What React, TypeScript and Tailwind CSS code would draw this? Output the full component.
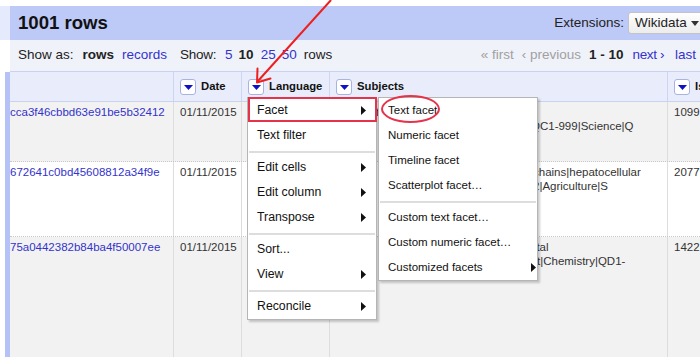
import React from "react";

const LINK = "text-[#3333cc]";

function DownBtn() {
  return (
    <span className="inline-flex h-[16px] w-[16px] shrink-0 items-center justify-center rounded-[3px] border border-[#a9b3df] bg-white">
      <svg width="9" height="5" viewBox="0 0 9 5">
        <path d="M0 0H9L4.5 5Z" fill="#0e10c8" />
      </svg>
    </span>
  );
}

function RightTri() {
  return (
    <svg width="5" height="9" viewBox="0 0 5 9" className="shrink-0">
      <path d="M0 0L5 4.5L0 9Z" fill="#111" />
    </svg>
  );
}

function MenuItem({ label, arrow, pad }: { label: string; arrow?: boolean; pad: string }) {
  return (
    <div className={`flex h-[25px] items-center justify-between ${pad}`}>
      <span className="whitespace-nowrap">{label}</span>
      {arrow ? <RightTri /> : null}
    </div>
  );
}

function Sep() {
  return (
    <div className="flex h-[7px] items-center px-[1px]">
      <div className="h-[2px] w-full bg-[#dddddd]" />
    </div>
  );
}

function HeaderCell({ label, w, border = true }: { label: string; w: string; border?: boolean }) {
  return (
    <div
      className={`flex h-full shrink-0 items-center gap-[5px] pl-[6px] ${w} ${
        border ? "border-r border-[#cdd5f0]" : ""
      }`}
    >
      <span className="-mt-[2px]">
        <DownBtn />
      </span>
      <span className="whitespace-nowrap font-bold text-[11.3px] text-[#111]">{label}</span>
    </div>
  );
}

function Row({
  h,
  bg,
  id,
  subjects,
  num,
  last,
}: {
  h: string;
  bg: string;
  id: string;
  subjects: { text: string; pl: string }[];
  num: string;
  last?: boolean;
}) {
  return (
    <div
      className={`flex ${h} ${bg} ${last ? "" : "border-b border-dotted border-[#c8c8c8]"} text-[11.5px] leading-[14px]`}
    >
      <div className={`w-[164px] shrink-0 overflow-hidden whitespace-nowrap border-r border-[#dddddd] pt-[3px] ${LINK}`}>
        {id}
      </div>
      <div className="w-[68px] shrink-0 border-r border-[#dddddd] pl-[6px] pt-[3px] text-[#333]">01/11/2015</div>
      <div className="w-[88px] shrink-0 border-r border-[#dddddd]" />
      <div className="w-[338px] shrink-0 overflow-hidden border-r border-[#dddddd] pl-[7px] pt-[3px] text-[#333]">
        {subjects.map((s, i) => (
          <div key={i} className={`whitespace-nowrap ${s.pl}`}>
            {s.text}
          </div>
        ))}
      </div>
      <div className="flex-1 whitespace-nowrap pl-[6px] pt-[3px] text-[#333]">{num}</div>
    </div>
  );
}

export default function App() {
  const p1 = "pl-[9px] pr-[10px]";
  const p2 = "pl-[9px] pr-[1px]";
  return (
    <div className="relative h-[357px] w-[700px] overflow-hidden bg-white font-['Liberation_Sans',Arial,sans-serif] text-[13px] text-[#222]">
      <div className="h-[6px]" />
      <div className="flex">
        {/* left strip */}
        <div className="flex w-[10px] shrink-0 flex-col">
          <div className="h-[34px] bg-[#e5eafc]" />
          <div className="h-[32px]" />
          <div className="ml-[5px] flex-1 bg-[#b4c2f7]" />
        </div>

        {/* main panel */}
        <div className="flex min-w-0 flex-1 flex-col">
          {/* band */}
          <div className="flex h-[34px] items-center bg-[#bdc9f6] pl-[8px]">
            <span className="text-[18.6px] font-bold text-[#111]">1001 rows</span>
            <span className="ml-auto text-[13.5px] text-[#222]">Extensions:</span>
            <span className="-mr-[4px] ml-[4px] flex h-[22px] w-[76px] shrink-0 items-center gap-[4px] rounded-[3px] border border-[#c4c4c4] bg-gradient-to-b from-white to-[#ececec] pl-[6px] text-[13.5px] text-[#222]">
              Wikidata
              <svg width="8" height="5" viewBox="0 0 8 5">
                <path d="M0 0H8L4 5Z" fill="#333" />
              </svg>
            </span>
          </div>

          {/* toolbar */}
          <div className="flex h-[32px] items-center border-b border-[#c9d2f0] bg-[#f0f2fa] pl-[8px] pr-[4px] text-[13.5px]">
            <span>Show as:</span>
            <span className="ml-[9px] font-bold">rows</span>
            <span className={`ml-[8px] ${LINK}`}>records</span>
            <span className="ml-[13px] tracking-[-0.3px]">Show:</span>
            <span className={`ml-[9px] ${LINK}`}>5</span>
            <span className="ml-[6px] font-bold">10</span>
            <span className={`ml-[7px] ${LINK}`}>25</span>
            <span className={`ml-[6px] ${LINK}`}>50</span>
            <span className="ml-[7px]">rows</span>
            <span className="ml-auto text-[#a0a0a0]">« first</span>
            <span className="ml-[8px] text-[#a0a0a0]">‹ previous</span>
            <span className="ml-[8px] font-bold">1 - 10</span>
            <span className={`ml-[9px] tracking-[-0.4px] ${LINK}`}>next ›</span>
            <span className={`ml-[11px] ${LINK}`}>last</span>
          </div>

          {/* header row */}
          <div className="flex h-[30px] border-b border-[#c9d2f0] bg-[#e9edfb]">
            <div className="h-full w-[164px] shrink-0 border-r border-[#cdd5f0]" />
            <HeaderCell label="Date" w="w-[68px]" />
            <HeaderCell label="Language" w="w-[88px]" />
            <HeaderCell label="Subjects" w="w-[338px]" />
            <HeaderCell label="Is" w="flex-1" border={false} />
          </div>

          <Row
            h="h-[60px]"
            bg="bg-[#f2f2f2]"
            id="cca3f46cbbd63e91be5b32412"
            subjects={[
              { text: "Chemistry|Physics", pl: "" },
              { text: "QC1-999|Science|Q", pl: "pl-[194px]" },
            ]}
            num="1099"
          />
          <Row
            h="h-[75px]"
            bg="bg-white"
            id="672641c0bd45608812a34f9e"
            subjects={[
              { text: "chains|hepatocellular", pl: "pl-[196px]" },
              { text: "2|Agriculture|S", pl: "pl-[196px]" },
            ]}
            num="2077"
          />
          <Row
            h="h-[120px]"
            bg="bg-[#f2f2f2]"
            id="75a0442382b84ba4f50007ee"
            subjects={[
              { text: "ntal", pl: "pl-[193px]" },
              { text: "t|Chemistry|QD1-", pl: "pl-[200px]" },
            ]}
            num="1422"
            last
          />
        </div>
      </div>

      {/* column menu */}
      <div className="absolute left-[247px] top-[97px] w-[130px] border border-[#b5b5b5] bg-white text-[12.3px] text-[#111] shadow-[2px_2px_2px_rgba(0,0,0,0.2)]">
        <MenuItem label="Facet" arrow pad={p1} />
        <MenuItem label="Text filter" pad={p1} />
        <Sep />
        <MenuItem label="Edit cells" arrow pad={p1} />
        <MenuItem label="Edit column" arrow pad={p1} />
        <MenuItem label="Transpose" arrow pad={p1} />
        <Sep />
        <MenuItem label="Sort..." pad={p1} />
        <MenuItem label="View" arrow pad={p1} />
        <Sep />
        <MenuItem label="Reconcile" arrow pad={p1} />
      </div>

      {/* facet submenu */}
      <div className="absolute left-[378px] top-[97px] w-[160px] border border-[#b5b5b5] bg-white text-[11.5px] text-[#111] shadow-[2px_2px_2px_rgba(0,0,0,0.2)]">
        <MenuItem label="Text facet" pad={p2} />
        <MenuItem label="Numeric facet" pad={p2} />
        <MenuItem label="Timeline facet" pad={p2} />
        <MenuItem label="Scatterplot facet…" pad={p2} />
        <Sep />
        <MenuItem label="Custom text facet…" pad={p2} />
        <MenuItem label="Custom numeric facet…" pad={p2} />
        <MenuItem label="Customized facets" arrow pad={p2} />
      </div>

      {/* annotations */}
      <div className="pointer-events-none absolute left-[248px] top-[97px] h-[25px] w-[129px] border-2 border-[#e5334b]" />
      <div className="pointer-events-none absolute left-[381px] top-[95px] h-[28px] w-[59px] rounded-[50%] border-2 border-[#e5334b]" />
      <svg className="pointer-events-none absolute left-0 top-0" width="700" height="357" viewBox="0 0 700 357">
        <path d="M331 0L257.5 81.5" stroke="#ee1f1f" strokeWidth="2" fill="none" />
        <path d="M257 82.5L257.5 68.5M257 82.5L270.5 78.5" stroke="#ee1f1f" strokeWidth="2" fill="none" strokeLinecap="round" />
      </svg>
    </div>
  );
}
